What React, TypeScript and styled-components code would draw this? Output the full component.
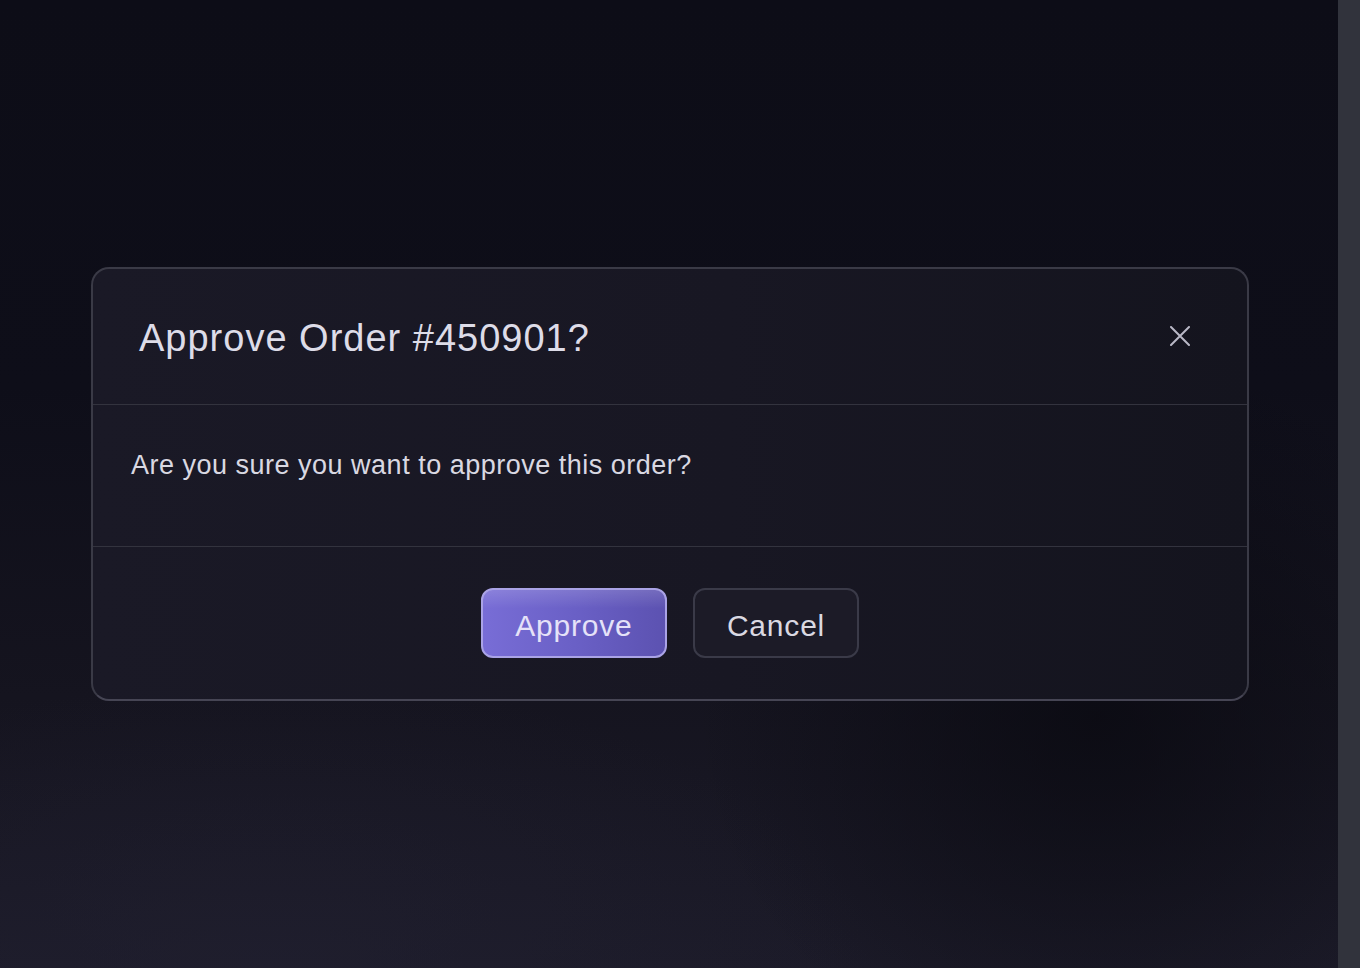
import React from 'react';
import styled, { createGlobalStyle } from 'styled-components';

const GlobalStyle = createGlobalStyle`
  * {
    box-sizing: border-box;
  }

  html, body {
    margin: 0;
    padding: 0;
    height: 100%;
    background: #0e0e18;
  }

  body {
    font-family: "Liberation Sans", Arial, Helvetica, sans-serif;
  }
`;

const CloseIcon: React.FC = () => (
  <svg width="20" height="20" viewBox="0 0 20 20" fill="none" xmlns="http://www.w3.org/2000/svg">
    <path d="M1 1L19 19M19 1L1 19" stroke="#b9b8c6" strokeWidth="2" strokeLinecap="round" />
  </svg>
);

const App: React.FC = () => {
  const orderId = '450901';

  return (
    <>
      <GlobalStyle />
      <Page>
        <Stage>
          <Dialog role="dialog" aria-labelledby="approve-title">
            <Header>
              <Title id="approve-title">Approve Order #{orderId}?</Title>
              <CloseButton aria-label="Close">
                <CloseIcon />
              </CloseButton>
            </Header>
            <Body>
              <Message>Are you sure you want to approve this order?</Message>
            </Body>
            <Footer>
              <ActionButton $primary>Approve</ActionButton>
              <ActionButton>Cancel</ActionButton>
            </Footer>
          </Dialog>
        </Stage>
        <SideRail />
      </Page>
    </>
  );
};

export default App;

const Page = styled.div`
  display: flex;
  width: 100%;
  height: 968px;
  overflow: hidden;
`;

const Stage = styled.main`
  flex: 1;
  display: flex;
  align-items: center;
  justify-content: center;
  padding: 0 89px 0 91px;
  background:
    radial-gradient(ellipse 30% 38% at 82% 74%, rgba(9, 9, 16, 0.75) 0%, rgba(9, 9, 16, 0) 100%),
    radial-gradient(ellipse 45% 30% at 20% 100%, rgba(34, 33, 50, 0.5) 0%, rgba(34, 33, 50, 0) 100%),
    linear-gradient(180deg, #0d0d17 0%, #0e0e19 40%, #15141f 72%, #1c1b29 100%);
`;

const SideRail = styled.aside`
  width: 22px;
  flex-shrink: 0;
  background: #31333c;
`;

const Dialog = styled.section`
  width: 100%;
  border: 2px solid #3a3a46;
  border-bottom-color: #464554;
  border-radius: 18px;
  background: linear-gradient(90deg, #1a1926 0%, #181723 55%, #14141e 100%);
  overflow: hidden;
`;

const Header = styled.header`
  display: flex;
  align-items: center;
  justify-content: space-between;
  height: 136px;
  padding: 4px 57px 0 46px;
  border-bottom: 1px solid #33333e;
`;

const Title = styled.h2`
  margin: 0;
  font-size: 38px;
  font-weight: 400;
  letter-spacing: 1px;
  color: #dddce8;
`;

const CloseButton = styled.button`
  display: flex;
  align-items: center;
  justify-content: center;
  padding: 0;
  margin-top: -6px;
  background: transparent;
  border: none;
  cursor: pointer;
`;

const Body = styled.div`
  height: 142px;
  padding: 43px 38px 0;
  border-bottom: 1px solid #33333e;
`;

const Message = styled.p`
  margin: 0;
  font-size: 27px;
  line-height: 34px;
  letter-spacing: 0.5px;
  color: #d9d8e2;
`;

const Footer = styled.footer`
  display: flex;
  align-items: center;
  justify-content: center;
  gap: 26px;
  height: 152px;
`;

const ActionButton = styled.button<{ $primary?: boolean }>`
  height: 70px;
  padding: 5px 32px 0;
  min-width: ${p => (p.$primary ? '186px' : '164px')};
  border-radius: 12px;
  border: 2px solid ${p => (p.$primary ? '#aaa3e6' : '#3a3a48')};
  background: ${p =>
    p.$primary
      ? 'linear-gradient(180deg, rgba(255,255,255,0.14) 0%, rgba(255,255,255,0) 28%), linear-gradient(90deg, #786dd6 0%, #6a60c6 50%, #5c52b1 100%)'
      : '#1c1b27'};
  color: ${p => (p.$primary ? '#e5e2f8' : '#dad9e2')};
  font-family: "Liberation Sans", Arial, sans-serif;
  font-size: 30px;
  letter-spacing: 0.8px;
  cursor: pointer;
`;
